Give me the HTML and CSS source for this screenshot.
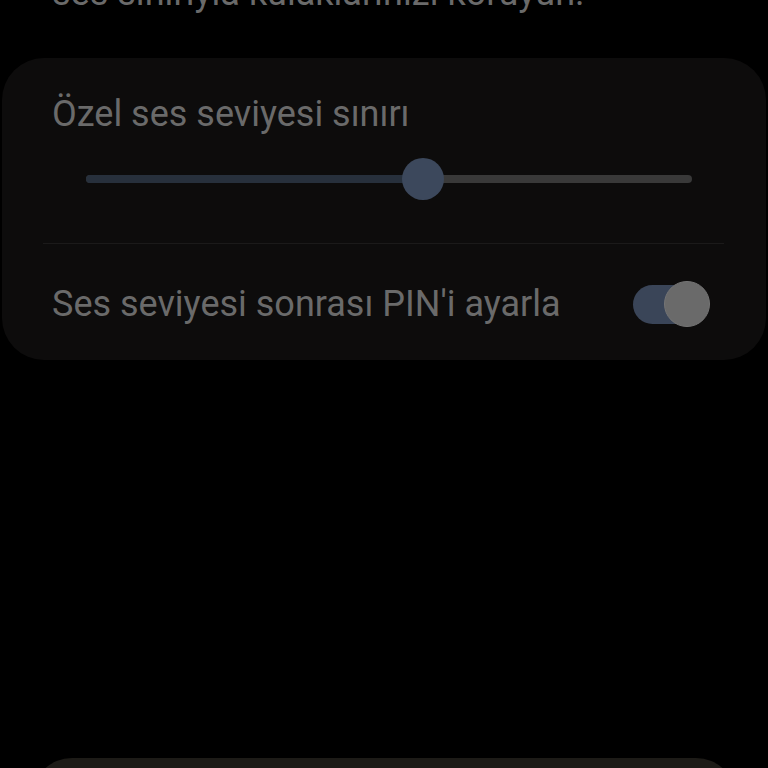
FILE: index.html
```html
<!DOCTYPE html>
<html lang="tr">
<head>
<meta charset="utf-8">
<title>Ses seviyesi sınırı</title>
<link rel="stylesheet" href="styles.css">
</head>
<body>
<main class="screen">
  <p class="intro">ses sınırıyla kulaklarınızı koruyun.</p>

  <section class="card">
    <div class="limit">
      <h2 class="label">Özel ses seviyesi sınırı</h2>
      <div class="slider">
        <div class="track">
          <div class="track-fill" style="width: 55.6%"></div>
          <span class="thumb"></span>
        </div>
      </div>
    </div>
    <hr class="divider">
    <div class="pin-row">
      <span class="label">Ses seviyesi sonrası PIN'i ayarla</span>
      <span class="switch"><span class="switch-knob"></span></span>
    </div>
  </section>

  <div class="bottom-sheet"></div>
</main>
</body>
</html>
```

FILE: styles.css
```css
html, body {
  margin: 0;
  padding: 0;
  background: #000;
  height: 768px;
  overflow: hidden;
}

.screen {
  font-family: Roboto, "Noto Sans", sans-serif;
  display: flex;
  flex-direction: column;
  height: 768px;
  overflow: hidden;
}

.intro {
  margin: -28px 0 0 52px;
  font-size: 36px;
  line-height: 42px;
  color: #6a6a6a;
  white-space: nowrap;
}

.card {
  flex: none;
  margin: 44px 2px 0;
  background: #0d0c0c;
  border-radius: 42px;
  height: 302px;
  display: flex;
  flex-direction: column;
}

.limit {
  padding: 35px 50px 0;
}

.label {
  margin: 0;
  font-weight: 400;
  font-size: 36px;
  line-height: 42px;
  color: #6a6a6a;
}

.slider {
  margin: 22px 0 0 34px;
  width: 606px;
  height: 44px;
  display: flex;
  align-items: center;
}

.track {
  position: relative;
  width: 100%;
  height: 8px;
  border-radius: 4px;
  background: #393939;
}

.track-fill {
  height: 100%;
  border-radius: 4px 0 0 4px;
  background: #27303c;
}

.thumb {
  position: absolute;
  left: 55.6%;
  top: 50%;
  width: 42px;
  height: 42px;
  margin: -21px 0 0 -21px;
  border-radius: 50%;
  background: #3c485c;
}

.divider {
  margin: 42px 42px 0 41px;
  border: 0;
  height: 1px;
  background: #1b1a1a;
}

.pin-row {
  flex: 1;
  display: flex;
  align-items: center;
  justify-content: space-between;
  padding: 4px 61px 0 50px;
}

.switch {
  position: relative;
  width: 72px;
  height: 39px;
  border-radius: 20px;
  background: #3a4558;
}

.switch-knob {
  position: absolute;
  right: -5px;
  top: 50%;
  width: 44px;
  height: 44px;
  margin-top: -23px;
  border-radius: 50%;
  background: #6a6a6a;
  border: 1px solid #757575;
}

.bottom-sheet {
  flex: none;
  margin: 398px 32px 0;
  height: 80px;
  border-radius: 40px;
  background: #1d1b17;
}
```
